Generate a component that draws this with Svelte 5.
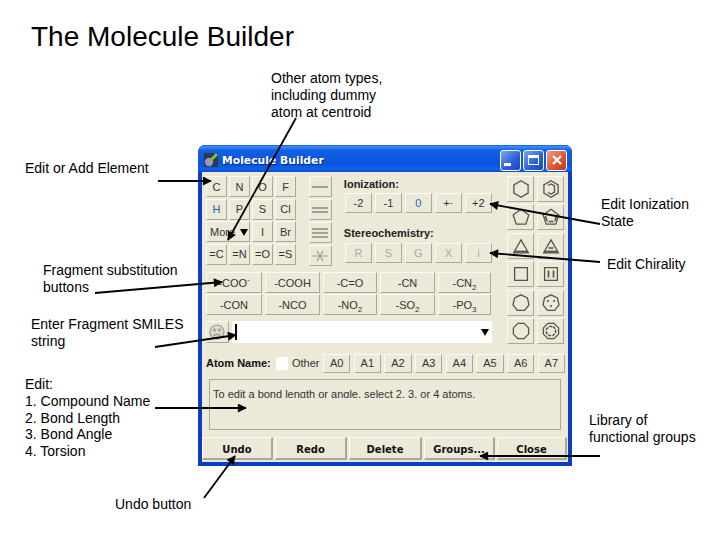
<script>
  const elements = ['C', 'N', 'O', 'F', 'H', 'P', 'S', 'Cl'];
  const doubles = ['=C', '=N', '=O', '=S'];
  const charges = ['-2', '-1', '0', '+·', '+2'];
  const chirality = ['R', 'S', 'G', 'X', 'i'];
  const atoms = ['A0', 'A1', 'A2', 'A3', 'A4', 'A5', 'A6', 'A7'];
  const actions = ['Undo', 'Redo', 'Delete', 'Groups...', 'Close'];

  const fragments = [
    ['-COO', '-', ''],
    ['-COOH', '', ''],
    ['-C=O', '', ''],
    ['-CN', '', ''],
    ['-CN', '', '2'],
    ['-CON', '', ''],
    ['-NCO', '', ''],
    ['-NO', '', '2'],
    ['-SO', '', '2'],
    ['-PO', '', '3']
  ];

  const rings = [6, 6, 5, 5, 3, 3, 4, 4, 7, 7, 8, 8];

  // regular polygon centred on the 24x22 icon box
  function polygon(sides, r) {
    const start = sides === 4 || sides === 8 ? -Math.PI / 2 + Math.PI / sides : -Math.PI / 2;
    const dy = sides === 3 ? 2.5 : sides === 5 ? 0.5 : 0;
    return Array.from({ length: sides }, (_, i) => {
      const a = start + (i * 2 * Math.PI) / sides;
      return `${(12 + r * Math.cos(a)).toFixed(1)},${(11 + dy + r * Math.sin(a)).toFixed(1)}`;
    }).join(' ');
  }

  function ringSize(sides) {
    if (sides === 3) return 8.6;
    if (sides === 4) return 9;
    return 8.2;
  }

  const arrows = [
    [296, 118, 228, 240],
    [158, 181, 211, 181],
    [95, 293, 222, 282],
    [155, 347, 236, 335],
    [155, 408, 246, 408],
    [204, 498, 235, 456],
    [600, 456, 480, 456],
    [600, 224, 490, 204],
    [600, 262, 490, 253]
  ];
</script>

<div class="slide">
  <h1>The Molecule Builder</h1>

  <p class="note" style="left:271px;top:70px">Other atom types,<br />including dummy<br />atom at centroid</p>
  <p class="note" style="left:25px;top:160px">Edit or Add Element</p>
  <p class="note" style="left:43px;top:262px">Fragment substitution<br />buttons</p>
  <p class="note" style="left:31px;top:316px">Enter Fragment SMILES<br />string</p>
  <p class="note" style="left:25px;top:376px">Edit:<br />1. Compound Name<br />2. Bond Length<br />3. Bond Angle<br />4. Torsion</p>
  <p class="note" style="left:115px;top:496px">Undo button</p>
  <p class="note" style="left:601px;top:196px">Edit Ionization<br />State</p>
  <p class="note" style="left:607px;top:256px">Edit Chirality</p>
  <p class="note" style="left:589px;top:412px">Library of<br />functional groups</p>

  <div class="window">
    <div class="titlebar">
      <svg class="appicon" viewBox="0 0 16 16" width="16" height="16">
        <rect x="1" y="1" width="14" height="14" fill="#2c3a4c" />
        <circle cx="6" cy="10" r="4.2" fill="#a58ad8" />
        <path d="M6 10 L14 2" stroke="#7cc04a" stroke-width="3" />
      </svg>
      <span class="title">Molecule Builder</span>
      <span class="caption"><i class="min"></i></span>
      <span class="caption"><i class="max"></i></span>
      <span class="caption close">
        <svg viewBox="0 0 12 12" width="12" height="12"><path d="M2 2 L10 10 M10 2 L2 10" stroke="#fff" stroke-width="2.2" /></svg>
      </span>
    </div>

    <div class="client">
      <div class="upper">
        <div class="tools">
          <div class="palette">
            <div class="elements">
              {#each elements as el}
                <button class:blue={el === 'H'}>{el}</button>
              {/each}
              <button class="more">More<b class="drop"></b></button>
              <button>I</button>
              <button>Br</button>
              {#each doubles as d}
                <button>{d}</button>
              {/each}
            </div>

            <div class="bonds">
              <button class="bond"><i></i></button>
              <button class="bond"><i></i><i></i></button>
              <button class="bond"><i></i><i></i><i></i></button>
              <button class="bond star">
                <svg viewBox="0 0 18 14" width="18" height="14">
                  <path d="M1 7 H17 M6 2 L12 12 M12 2 L6 12" stroke="#a5a294" stroke-width="1.2" />
                </svg>
              </button>
            </div>

            <div class="states">
              <h2>Ionization:</h2>
              <div class="state-row">
                {#each charges as c}
                  <button class:blue={c === '0'}>{c}</button>
                {/each}
              </div>
              <h2 class="second">Stereochemistry:</h2>
              <div class="state-row">
                {#each chirality as c}
                  <button class="off">{c}</button>
                {/each}
              </div>
            </div>
          </div>

          <div class="fragments">
            {#each fragments as [label, sup, sub]}
              <button>{label}{#if sup}<sup>{sup}</sup>{/if}{#if sub}<sub>{sub}</sub>{/if}</button>
            {/each}
          </div>

          <div class="smiles">
            <button class="face">
              <svg viewBox="0 0 18 18" width="18" height="18" fill="none" stroke="#a09d90" stroke-width="1.2">
                <circle cx="9" cy="9" r="7" fill="#dcd9c9" />
                <circle cx="6.5" cy="7" r="0.8" fill="#a09d90" />
                <circle cx="11.5" cy="7" r="0.8" fill="#a09d90" />
                <path d="M5.5 13 Q9 9.5 12.5 13" />
              </svg>
            </button>
            <div class="field">
              <span class="cursor"></span>
              <b class="drop"></b>
            </div>
          </div>
        </div>

        <div class="rings">
          {#each rings as sides, i}
            <button class="ring">
              <svg viewBox="0 0 24 22" width="24" height="22" fill="none" stroke="#55554c">
                <polygon points={polygon(sides, ringSize(sides))} stroke-width="1.3" />
                {#if sides === 3}
                  <path d="M5.5 16.6 H18.5" stroke-width="2" />
                {/if}
                {#if i % 2 === 1}
                  {#if sides === 3}
                    <path d="M9.5 13 H14.5" stroke-width="1.6" />
                  {:else if sides === 4}
                    <path d="M9.5 7.5 V14.5 M14.5 7.5 V14.5" stroke-width="1.7" />
                  {:else if sides === 7}
                    <path d="M9 8 V10 M15 8 V10 M12 13 V15" stroke-width="1.5" />
                  {:else if sides === 6}
                    <path d="M9 7.5 L12 6 L15.5 8 V14 L12 16 L9 14.5" stroke-width="1.3" />
                  {:else if sides === 5}
                    <path d="M6.5 10 L8 15 M17.5 10 L16 15 M9.5 15.5 H14.5" stroke-width="1.6" />
                  {:else}
                    <polygon points={polygon(sides, 5)} stroke-width="1.5" stroke-dasharray="3.2 1.2" />
                  {/if}
                {/if}
              </svg>
            </button>
          {/each}
        </div>
      </div>

      <div class="atoms">
        <strong>Atom Name:</strong>
        <span class="check"></span>
        <span class="other">Other</span>
        <div class="atom-row">
          {#each atoms as a}
            <button>{a}</button>
          {/each}
        </div>
      </div>

      <div class="message">
        <span>To edit a bond length or angle, select 2, 3, or 4 atoms.</span>
      </div>

      <div class="actions">
        {#each actions as a}
          <button>{a}</button>
        {/each}
      </div>
    </div>
  </div>

  <svg class="arrows" viewBox="0 0 720 540" width="720" height="540">
    <defs>
      <marker id="head" viewBox="0 0 10 10" refX="9" refY="5" markerWidth="6" markerHeight="5" orient="auto">
        <path d="M0 0 L10 5 L0 10 Z" fill="#000" />
      </marker>
    </defs>
    {#each arrows as [x1, y1, x2, y2]}
      <line {x1} {y1} {x2} {y2} stroke="#000" stroke-width="1.8" marker-end="url(#head)" />
    {/each}
  </svg>
</div>

<style>
  :global(body) {
    margin: 0;
    background: #fff;
  }

  .slide {
    position: relative;
    width: 720px;
    height: 540px;
    overflow: hidden;
    font-family: "Liberation Sans", Arial, sans-serif;
    color: #000;
  }

  h1 {
    position: absolute;
    left: 31px;
    top: 21px;
    margin: 0;
    font-size: 28px;
    font-weight: 400;
    line-height: 32px;
    white-space: nowrap;
  }

  .note {
    position: absolute;
    margin: 0;
    font-size: 14px;
    line-height: 16.8px;
    white-space: nowrap;
  }

  .arrows {
    position: absolute;
    left: 0;
    top: 0;
    pointer-events: none;
  }

  .window {
    position: absolute;
    left: 198px;
    top: 145px;
    width: 374px;
    height: 321px;
    display: flex;
    flex-direction: column;
    box-sizing: border-box;
    background: #0a4fd6;
    border-radius: 7px 7px 0 0;
    border: solid #0a3fc0;
    border-width: 0 4px 4px;
    font-size: 11px;
  }

  .titlebar {
    height: 27px;
    box-sizing: border-box;
    flex: none;
    margin: 0 -4px;
    padding: 3px 5px 0 5px;
    display: flex;
    align-items: center;
    gap: 2px;
    border-radius: 7px 7px 0 0;
    background: linear-gradient(#0a5ae0 0, #3d8df5 6%, #1160e6 20%, #0a55dc 70%, #0c62ee 90%, #0a48c8 100%);
  }

  .appicon {
    margin-right: 1px;
  }

  .title {
    flex: 1;
    color: #fff;
    font: 700 10.8px "DejaVu Sans", sans-serif;
    text-shadow: 1px 1px 1px #0a2a80;
  }

  .caption {
    width: 21px;
    height: 21px;
    box-sizing: border-box;
    display: flex;
    align-items: center;
    justify-content: center;
    border: 1px solid #fff;
    border-radius: 3px;
    background: linear-gradient(135deg, #7aa6f2, #2a5fd8 60%, #1a46c0);
  }

  .caption .min {
    width: 7px;
    height: 3px;
    background: #fff;
    margin: 9px 7px 0 0;
  }

  .caption .max {
    width: 11px;
    height: 10px;
    box-sizing: border-box;
    border: 1px solid #fff;
    border-top-width: 3px;
  }

  .close {
    background: linear-gradient(135deg, #f0a088, #d85530 60%, #c03a1c);
  }

  .client {
    flex: 1;
    background: #ece9d8;
    padding: 4px 0 2px 4px;
    display: flex;
    flex-direction: column;
  }

  button {
    margin: 0;
    padding: 0;
    min-width: 0;
    box-sizing: border-box;
    background: #ece9d8;
    border: 1px solid;
    border-color: #fbfaf4 #aca899 #aca899 #fbfaf4;
    border-radius: 0;
    color: #333;
    font: 400 11px "Liberation Sans", Arial, sans-serif;
    white-space: nowrap;
  }

  .blue {
    color: #2a5cb0;
  }

  .upper {
    display: flex;
    gap: 15px;
  }

  .tools {
    width: 286px;
  }

  .palette {
    display: flex;
    height: 91px;
  }

  .elements {
    width: 90px;
    height: 89px;
    display: grid;
    grid-template-columns: repeat(4, 21px);
    grid-auto-rows: 21px;
    column-gap: 2px;
    row-gap: 1.5px;
  }

  .more {
    grid-column: span 2;
    text-align: left;
    padding-left: 3px;
  }

  .drop {
    display: inline-block;
    width: 0;
    height: 0;
    border: solid transparent;
    border-width: 7px 4px 0;
    border-top-color: #000;
  }

  .more .drop {
    margin-left: 5px;
  }

  .bonds {
    width: 23px;
    margin-left: 13px;
    display: grid;
    grid-auto-rows: 21px;
    gap: 2px;
  }

  .bond {
    display: flex;
    flex-direction: column;
    align-items: center;
    justify-content: center;
    gap: 2px;
  }

  .bond i {
    display: block;
    width: 16px;
    height: 2px;
    background: #a5a294;
  }

  .states {
    width: 149px;
    margin-left: 12px;
  }

  h2 {
    margin: 3px 0 3px;
    font-size: 11px;
    line-height: 11px;
    color: #222;
  }

  h2.second {
    margin-top: 15px;
    margin-bottom: 4px;
  }

  .state-row {
    display: grid;
    grid-template-columns: repeat(5, 27px);
    gap: 3px;
    height: 20px;
    margin-left: 1px;
  }

  .off {
    color: #aca899;
  }

  .fragments {
    margin-top: 5px;
    display: grid;
    grid-template-columns: 56px 55px 54px 55px 53px;
    grid-auto-rows: 21px;
    column-gap: 3px;
    row-gap: 1px;
  }

  sup,
  sub {
    font-size: 8px;
    line-height: 0;
  }

  .smiles {
    margin-top: 6px;
    display: flex;
    gap: 3px;
    height: 22px;
  }

  .face {
    width: 23px;
    display: flex;
    align-items: center;
    justify-content: center;
  }

  .field {
    width: 261px;
    background: #fff;
    display: flex;
    align-items: center;
    justify-content: space-between;
    padding: 0 3px;
    box-sizing: border-box;
  }

  .cursor {
    width: 2px;
    height: 16px;
    background: #000;
  }

  .rings {
    display: grid;
    grid-template-columns: repeat(2, 27px);
    grid-auto-rows: 26px;
    column-gap: 3px;
    row-gap: 2.4px;
  }

  .ring {
    display: flex;
    align-items: center;
    justify-content: center;
  }

  .atoms {
    margin-top: 10px;
    height: 19px;
    display: flex;
    align-items: center;
    color: #333;
  }

  .atoms strong {
    width: 70px;
    color: #111;
  }

  .check {
    width: 12px;
    height: 13px;
    background: #fff;
  }

  .other {
    margin-left: 4px;
    width: 31px;
  }

  .atom-row {
    width: 242px;
    height: 19px;
    display: grid;
    grid-template-columns: repeat(8, 1fr);
    column-gap: 3.4px;
  }

  .message {
    margin: 6px 0 0 3px;
    width: 352px;
    height: 51px;
    box-sizing: border-box;
    border: 1px solid #aca899;
    padding: 8px 0 0 3px;
    color: #333;
  }

  .message span {
    display: block;
    height: 10px;
    line-height: 12px;
    overflow: hidden;
    white-space: nowrap;
  }

  .actions {
    margin: 7px 0 0 -4px;
    display: grid;
    grid-template-columns: 71px 72px 73px 71px 70px;
    gap: 2px;
    height: 23px;
  }

  .actions button {
    border-width: 1px 2px 2px 1px;
    padding-top: 3px;
    font: 700 10px "DejaVu Sans", sans-serif;
    color: #111;
  }
</style>
